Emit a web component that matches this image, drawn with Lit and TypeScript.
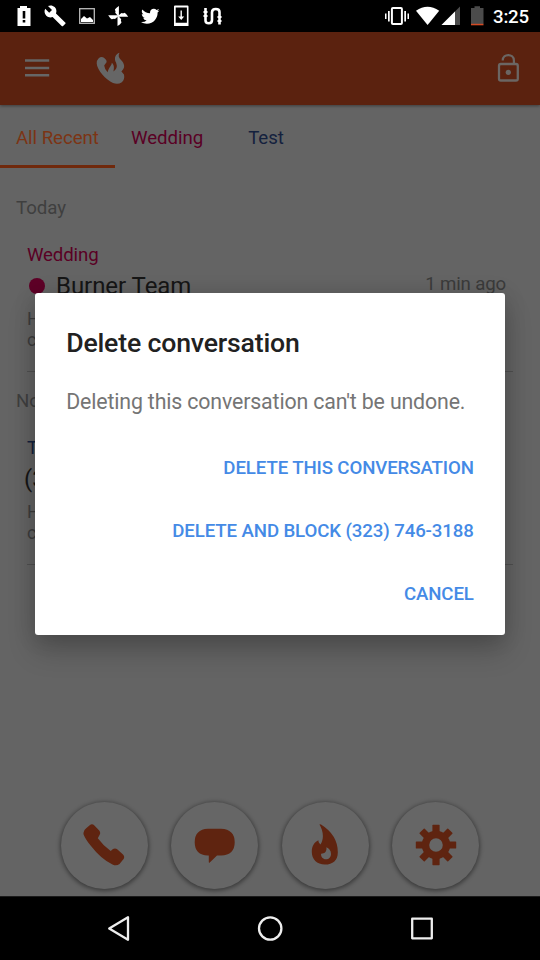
import { LitElement, html, css, svg } from "lit";
import { customElement } from "lit/decorators.js";

const phoneIcon = html`<svg width="42" height="42" viewBox="0 0 42 42"><path fill="#5f2410" d="M3.2 4.2L7 .9Q9.300-.5 11.400 1.400L16.200 6.500Q18 9 16.500 11L14.800 14.300Q20 21.500 27.700 27L30 25Q32.300 23.700 34.500 25.500L40 30.500Q42 32.500 40.600 35L36.500 40Q33.500 42.400 29.500 40.500Q18 35 8 22Q2.500 15.500.6 10.500Q-.2 6.500 3.200 4.200Z"/></svg>`;
const chatIcon = html`<svg width="42" height="42" viewBox="0 0 42 42"><path fill="#5f2410" d="M14 4.800H27Q40.700 5.500 40.700 18.300Q40.700 31 27 31.600H23L15.500 38.700Q14.800 39 14.800 38V31.600H14Q.7 31 .7 18.300Q.7 5.500 14 4.800Z"/></svg>`;
const flameIcon = html`<svg width="42" height="42" viewBox="0 0 42 42"><path fill="#5f2410" fill-rule="evenodd" d="M15.500.4Q15.900-.2 17 .6Q33.600 11 33.800 28C34 36 29 40.600 21 40.600C12.800 40.600 7.800 35 7.800 28C7.800 22 10.500 18 14.500 16.300Q14 18.800 16.500 20.500C20.500 14 19 6.500 15.500.4ZM22.300 23.300C23.200 27.500 20.500 30 17 29.800C17 33 18.700 35.300 21.900 35.300C25 35.300 27 33 27 30C27 26.500 25 24.200 22.300 23.300Z"/></svg>`;
const gearIcon = html`<svg width="42" height="42" viewBox="-21 -21 42 42"><g fill="#5f2410">
${[0, 45, 90, 135, 180, 225, 270, 315].map((a) => svg`<path transform="rotate(${a})" d="M-3.600 -10V-19.500Q-3.600 -20.200 -2.900 -20.200H2.900Q3.600 -20.200 3.600 -19.500V-10Z"/>`)}
</g><circle r="10.500" fill="none" stroke="#5f2410" stroke-width="7.400"/></svg>`;

@customElement("app-root")
export class AppRoot extends LitElement {
  static styles = css`
    :host { display: block; position: relative; width: 540px; height: 960px; overflow: hidden; background: #646464; font-family: Roboto, sans-serif; font-size: 18.67px; letter-spacing: -.05px; }
    * { box-sizing: border-box; }
    svg { display: block; flex: none; }
    .screen { height: 960px; display: flex; flex-direction: column; }
    .status { flex: none; height: 32px; background: #000; display: flex; }
    .clock { color: #fff; font-weight: 500; line-height: 34px; padding-left: 2px; letter-spacing: -.2px; }
    .bar { flex: none; height: 73px; background: #5b220f; display: flex; align-items: center; justify-content: space-between; box-shadow: 0 1px 3px rgba(0,0,0,.4); }
    .tabs { flex: none; height: 63px; display: flex; line-height: 66px; }
    .tab { height: 63px; padding: 0 16px; }
    .all { width: 115px; color: #7c3414; border-bottom: 3px solid #70290c; white-space: nowrap; }
    .wed { color: #5a0024; }
    .test { color: #14213e; }
    .tabs .test { padding-left: 29px; }
    .content { flex: 1; position: relative; }
    .day { height: 26px; line-height: 26px; padding-left: 16px; color: #3f3f3f; }
    .first { margin-top: 27px; }
    .thread { margin: 20px 27px 0; height: 131px; border-bottom: 1px solid #515151; }
    .label { line-height: 28px; height: 27px; }
    .wed.label { letter-spacing: -.15px; }
    .name { display: flex; height: 36px; align-items: center; color: #161616; font-size: 24px; }
    .dot { width: 16px; height: 16px; border-radius: 50%; background: #5e0027; margin: 0 11px 0 2px; }
    .time { margin-left: auto; margin-right: 7px; color: #3b3b3b; font-size: 18.67px; line-height: 26px; height: 30px; letter-spacing: -.15px; }
    .snippet { font-size: 18px; line-height: 21.3px; color: #3d3d3d; padding-top: 4px; }
    .number { margin-left: -3px; }
    .second { margin-top: 16px; }
    .actions { flex: none; height: 96px; display: flex; justify-content: center; gap: 23.400px; padding-top: 1.500px; }
    .round { width: 87px; height: 87px; border-radius: 50%; background: #666; display: flex; align-items: center; justify-content: center; box-shadow: 0 1px 4px 1px rgba(0,0,0,.42); }
    .nav { flex: none; height: 64px; background: #000; border-top: 1px solid #1b1b1b; }
    .dialog { position: absolute; left: 34.700px; top: 293.300px; width: 470.600px; height: 341.400px; background: #fff; border-radius: 3px; padding: 34px 31.500px 0; box-shadow: 0 16px 28px rgba(0,0,0,.2), 0 2px 22px rgba(0,0,0,.14); }
    h1 { margin: 0; font-size: 26.67px; line-height: 32px; font-weight: 500; color: #212121; white-space: nowrap; letter-spacing: -.18px; }
    p { margin: 30px 0 0; font-size: 21.33px; line-height: 26px; color: #757575; white-space: nowrap; letter-spacing: -.15px; }
    .buttons { margin-top: 22px; display: flex; flex-direction: column; align-items: flex-end; }
    button { border: 0; padding: 0; background: none; font: 500 18.67px/63px Roboto, sans-serif; height: 63px; color: #448ae6; white-space: nowrap; letter-spacing: -.12px; }
  `;

  render() {
    return html`
      <div class="screen">
        <div class="status">
          <svg width="491" height="32" viewBox="0 0 491 32" fill="#fff">
            <path fill-rule="evenodd" d="M17.500 8H20V6H27V8H30.500V26H17.500ZM22.700 11V18.500H25.300V11ZM22.700 20V22.600H25.300V20Z"/>
            <path d="M65.200 22.500L56 13.400C57 11 56.300 8.600 54.600 7C52.800 5.200 50 5 48 6L52 9.900L49.200 12.700L45.200 8.800C44 11.100 44.400 13.800 46.300 15.700C48 17.300 50.400 17.900 52.600 17L61.700 26C62.100 26.400 62.700 26.400 63.100 26L65.300 23.800C65.800 23.400 65.700 22.800 65.200 22.500Z"/>
            <rect x="79.700" y="8.700" width="14.600" height="14.600" fill="none" stroke="#bbb" stroke-width="1.300"/><path d="M81 22V19L84 16L87 18.500L90 17L93 20V22Z"/>
            <g transform="translate(118.200 16)">${[0, 90, 180, 270].map((a) => svg`<path transform="rotate(${a})" d="M.7 -10V0H-.2L-3 -3.200Q-2.200 -4.300 -3.300 -6.500Q-2 -8.500 .7 -10Z"/>`)}</g>
            <path transform="translate(139.700 5.200) scale(.88)" d="M22.460 6c-.77.350-1.600.58-2.460.69.880-.53 1.560-1.370 1.880-2.380-.83.500-1.750.85-2.720 1.050C18.370 4.500 17.260 4 16 4c-2.350 0-4.270 1.920-4.270 4.290 0 .34.040.67.110.98C8.280 9.090 5.110 7.380 3 4.790c-.37.630-.58 1.370-.58 2.150 0 1.490.75 2.810 1.910 3.560-.71 0-1.370-.2-1.950-.5v.03c0 2.080 1.480 3.820 3.440 4.210a4.220 4.220 0 0 1-1.930.07 4.280 4.280 0 0 0 4 2.980 8.521 8.521 0 0 1-5.330 1.840c-.34 0-.68-.02-1.020-.06C3.440 20.290 5.700 21 8.120 21 16 21 20.330 14.460 20.330 8.790c0-.19 0-.37-.01-.56.840-.6 1.560-1.360 2.140-2.230z"/>
            <path fill-rule="evenodd" d="M174 6.500Q174 5.500 175 5.500H187.500Q188.500 5.500 188.500 6.500V26H174ZM175.700 7.500V22.800H186.900V7.500Z"/><path d="M180.500 10.500H181.900V16.500H184.200L181.200 20L178.200 16.500H180.500Z"/>
            <path d="M205.500 8V20.500Q205.500 23.300 208.800 23.300Q212 23.300 212 20V12.300Q212 9 215.800 9Q219.500 9 219.500 12V24.500" fill="none" stroke="#fff" stroke-width="2.600"/><path d="M203.500 11H207.500V13H203.500ZM203.500 15H207.500V17H203.500ZM217.500 16H221.500V18H217.500ZM217.500 20H221.500V22H217.500Z"/>
            <rect x="391.900" y="8" width="10" height="16" rx="1" fill="none" stroke="#fff" stroke-width="2"/><path d="M385 13.500H386.500V19H385ZM388 11H389.700V21.500H388ZM404.300 11H406V21.500H404.300ZM407.500 13.500H409V19H407.500Z"/>
            <path d="M416 10.800Q427.500 2.600 439.200 10.800L427.600 25Z"/>
            <path fill="#4c4c4c" d="M460 6.500V25H441.500Z"/><path d="M455 11.500V25H441.500Z"/>
            <path fill="#4b4b4b" d="M471 8H474.500V6.300H480V8H483.500V24H471Z"/><path fill="#d44a24" d="M471 23.800H483.500V25.300H471Z"/>
          </svg>
          <div class="clock">3:25</div>
        </div>
        <div class="bar">
          <svg width="130" height="73" viewBox="0 32 130 73" fill="#666">
            <path d="M25 59.200H49.200V61.700H25ZM25 66.700H49.200V69.200H25ZM25 74H49.200V76.500H25Z"/>
            <path d="M98.500 58.500Q101 56 104 57.700Q107 60 106.700 62L104.200 65.500Q104.500 69 107.600 72.300C109 67 111.500 66 111.800 62.700C114.200 64.500 114.300 68 113.400 71.500C117 69 117.500 66.500 116 62.500C113.700 58 115.500 54 119.500 52.700C118 55.800 118.700 57.600 121 60C124.500 63.500 125 67 123 69.500L121.400 71.600L124 74.500Q125 79.500 121.800 82.200Q118 85 113 83C106 80 97 70 96.700 63.500Q96.500 60.500 98.500 58.500Z"/>
          </svg>
          <svg width="50" height="73" viewBox="490 32 50 73">
            <rect x="499" y="64" width="18.800" height="16.500" rx="1.800" fill="none" stroke="#6b6663" stroke-width="2.300"/><path d="M502.700 60.500C502.700 53.200 513.900 53.200 513.900 60.500V64" fill="none" stroke="#6b6663" stroke-width="2.200"/><circle cx="508.300" cy="72.300" r="2.600" fill="#6b6663"/>
          </svg>
        </div>
        <div class="tabs"><div class="tab all">All Recent</div><div class="tab wed">Wedding</div><div class="tab test">Test</div></div>
        <div class="content">
          <div class="day first">Today</div>
          <div class="thread">
            <div class="label wed">Wedding</div>
            <div class="name"><span class="dot"></span><span>Burner Team</span><span class="time">1 min ago</span></div>
            <div class="snippet">Hi<br>c</div>
          </div>
          <div class="day second">Now</div>
          <div class="thread">
            <div class="label test">Test</div>
            <div class="name"><span class="number">(323)</span></div>
            <div class="snippet">Hi<br>c</div>
          </div>
        </div>
        <div class="actions">
          <div class="round">${phoneIcon}</div><div class="round">${chatIcon}</div><div class="round">${flameIcon}</div><div class="round">${gearIcon}</div>
        </div>
        <div class="nav">
          <svg width="540" height="63" viewBox="0 897 540 63" fill="none" stroke="#eee" stroke-width="2.300" stroke-linejoin="round">
            <path d="M109.200 928.500L128 917.300V939.800Z"/><circle cx="270.200" cy="928.500" r="11.200"/><rect x="412.200" y="918.700" width="19.600" height="19.600"/>
          </svg>
        </div>
      </div>
      <div class="dialog">
        <h1>Delete conversation</h1>
        <p>Deleting this conversation can't be undone.</p>
        <div class="buttons"><button>DELETE THIS CONVERSATION</button><button>DELETE AND BLOCK (323) 746-3188</button><button>CANCEL</button></div>
      </div>`;
  }
}
